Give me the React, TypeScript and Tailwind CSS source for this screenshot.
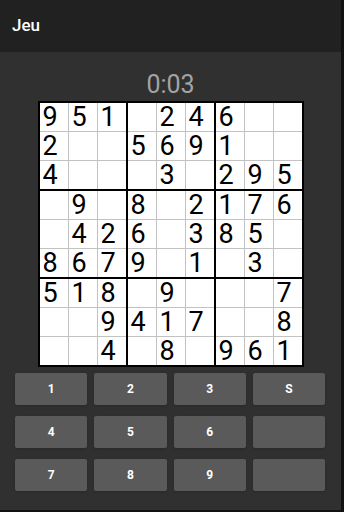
const puzzle: string[] = [
  '951024600',
  '200569100',
  '400030295',
  '090802176',
  '042603850',
  '867901030',
  '518090007',
  '009417008',
  '004080961',
]

const keys = ['1', '2', '3', 'S', '4', '5', '6', '', '7', '8', '9', '']

function Box({ br, bc }: { br: number; bc: number }) {
  const cells = []
  for (let r = 0; r < 3; r++) {
    for (let c = 0; c < 3; c++) {
      const v = puzzle[br * 3 + r][bc * 3 + c]
      cells.push(
        <div
          key={`${r}-${c}`}
          className="w-[28px] h-[28px] bg-white pl-[3px] text-[27px] leading-[28px] text-black"
        >
          {v === '0' ? '' : v}
        </div>
      )
    }
  }
  return <div className="grid grid-cols-3 gap-px bg-[#c2c2c2]">{cells}</div>
}

export default function App() {
  return (
    <div
      className="w-[344px] h-[512px] flex flex-col bg-[#303030] border-r-[3px] border-b-[2px] border-[#121212] overflow-hidden"
      style={{ fontFamily: 'Roboto, "Liberation Sans", sans-serif' }}
    >
      {/* Toolbar */}
      <div className="h-[52px] shrink-0 bg-[#212121] flex items-center px-[12px]">
        <span className="text-white text-[17px] font-medium">Jeu</span>
      </div>

      {/* Timer */}
      <div className="mt-[18px] mb-[2px] text-center text-[25px] leading-[29px] text-[#a3a3a3]">0:03</div>

      {/* Board */}
      <div className="mx-auto bg-black p-[2px] grid grid-cols-3 gap-[2px]">
        {[0, 1, 2].map((br) => [0, 1, 2].map((bc) => <Box key={`${br}${bc}`} br={br} bc={bc} />))}
      </div>

      {/* Keypad */}
      <div className="mt-[6px] pl-[15px] pr-[16px] grid grid-cols-4 gap-x-[7px] gap-y-[11px]">
        {keys.map((k, i) => (
          <button
            key={i}
            className="h-[32px] rounded-[2px] bg-[#5a5a5a] shadow-sm text-white text-[12px] font-bold flex items-center justify-center"
          >
            {k}
          </button>
        ))}
      </div>
    </div>
  )
}
